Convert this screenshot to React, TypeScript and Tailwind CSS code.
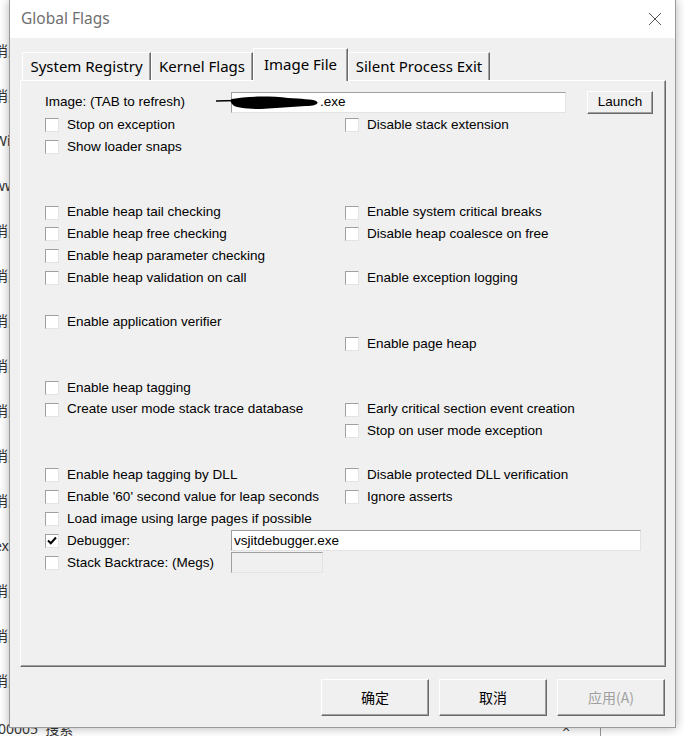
import React from "react";

type Row = [string | null, string | null];

const rows: Row[] = [
  ["Stop on exception", "Disable stack extension"],
  ["Show loader snaps", null],
  [null, null],
  [null, null],
  ["Enable heap tail checking", "Enable system critical breaks"],
  ["Enable heap free checking", "Disable heap coalesce on free"],
  ["Enable heap parameter checking", null],
  ["Enable heap validation on call", "Enable exception logging"],
  [null, null],
  ["Enable application verifier", null],
  [null, "Enable page heap"],
  [null, null],
  ["Enable heap tagging", null],
  ["Create user mode stack trace database", "Early critical section event creation"],
  [null, "Stop on user mode exception"],
  [null, null],
  ["Enable heap tagging by DLL", "Disable protected DLL verification"],
  ["Enable '60' second value for leap seconds", "Ignore asserts"],
  ["Load image using large pages if possible", null],
];

function Box({ checked }: { checked?: boolean }) {
  return (
    <span className="w-[14px] h-[14px] shrink-0 bg-white border-t border-l border-[#a0a0a0] border-r border-b border-r-[#e3e3e3] border-b-[#e3e3e3] flex items-center justify-center">
      {checked && (
        <svg width="10" height="9" viewBox="0 0 10 9">
          <path d="M1 4.5 L3.8 7.2 L9 1.5" stroke="#000" strokeWidth="2" fill="none" />
        </svg>
      )}
    </span>
  );
}

function Check({ label, checked }: { label: string; checked?: boolean }) {
  return (
    <div className="flex items-center gap-[8px] h-full">
      <Box checked={checked} />
      <span className="whitespace-nowrap">{label}</span>
    </div>
  );
}

function Tab({ label, w, active }: { label: string; w: string; active?: boolean }) {
  if (active)
    return (
      <div
        className={`${w} h-[33px] -mb-[1px] relative z-10 bg-[#f0f0f0] border-t border-l border-white border-r border-r-[#696969] shadow-[inset_-1px_0_0_#a0a0a0] flex items-start justify-center pt-[4px]`}
      >
        {label}
      </div>
    );
  return (
    <div
      className={`${w} h-[28px] border-t border-l border-white border-r border-r-[#696969] shadow-[inset_-1px_0_0_#a0a0a0] flex items-center justify-center`}
    >
      {label}
    </div>
  );
}

function Btn({ label, disabled }: { label: string; disabled?: boolean }) {
  return (
    <div
      className={`w-[108px] h-[37px] border-t border-l border-white border-r border-b border-r-[#696969] border-b-[#696969] shadow-[inset_-1px_-1px_0_#a0a0a0] flex items-center justify-center ${
        disabled ? "text-[#a0a0a0]" : "text-black"
      }`}
    >
      {label}
    </div>
  );
}

const bgLabels = ["消息", "消息", "Win", "ww", "消息", "消息", "消息", "消息", "消息", "消息", "消息", "exe", "消息", "消息", "消息"];

export default function App() {
  return (
    <div className="relative w-[685px] h-[736px] bg-white overflow-hidden font-['Liberation_Sans','Noto_Sans_CJK_SC',sans-serif] text-[13.5px] text-black">
      {/* window behind the dialog */}
      {bgLabels.map((t, i) => (
        <span
          key={i}
          className="absolute left-[-6px] text-[14px] text-[#333] font-['Noto_Sans','Noto_Sans_CJK_SC',sans-serif]"
          style={{ top: 40 + i * 45 }}
        >
          {t}
        </span>
      ))}
      <span className="absolute left-[-2px] top-[718px] text-[14px] text-[#333] font-['Noto_Sans','Noto_Sans_CJK_SC',sans-serif]">
        00005&nbsp;&nbsp;搜索
      </span>
      <span className="absolute left-[562px] top-[718px] text-[14px] text-[#333]">×</span>
      <div className="absolute left-[600px] top-[728px] w-px h-[10px] bg-[#999]" />

      {/* dialog */}
      <div className="absolute left-[9px] top-0 w-[667px] h-[728px] flex flex-col border border-[#9a9a9a] border-t-0 bg-[#f0f0f0] shadow-[0_0_10px_rgba(0,0,0,0.3)] z-10">
        <div className="h-[38px] bg-white flex items-center justify-between pl-[11px] pr-[13px] font-['Noto_Sans',sans-serif] text-[15.5px] text-[#6f6f6f]">
          <span>Global Flags</span>
          <svg width="14" height="14" viewBox="0 0 14 14">
            <path d="M1 1 L13 13 M13 1 L1 13" stroke="#555" strokeWidth="1" />
          </svg>
        </div>

        <div className="flex-1 flex flex-col px-[10px] pt-[10px]">
          <div className="flex items-end pl-[2px] h-[32px] font-['Noto_Sans',sans-serif] text-[15px]">
            <Tab label="System Registry" w="w-[129px]" />
            <Tab label="Kernel Flags" w="w-[102px]" />
            <Tab label="Image File" w="w-[95px]" active />
            <Tab label="Silent Process Exit" w="w-[142px]" />
          </div>

          <div className="w-[646px] h-[587px] border-t border-l border-white border-r border-b border-r-[#696969] border-b-[#696969] shadow-[inset_-1px_-1px_0_#a0a0a0] pl-[24px] pt-[10px]">
            <div className="h-[23px] flex items-center">
              <span className="w-[186px] shrink-0 whitespace-nowrap">Image: (TAB to refresh)</span>
              <div className="relative w-[335px] h-[21px] bg-white border-t border-l border-[#a0a0a0] border-r border-b border-r-[#e3e3e3] border-b-[#e3e3e3] flex items-center pl-[2px]">
                <span className="pl-[86px]">.exe</span>
                <svg className="absolute left-[-16px] top-[2px]" width="112" height="16" viewBox="0 0 112 16">
                  <path d="M0 6 L20 5.5" stroke="#000" strokeWidth="1.5" />
                  <path
                    d="M16 4 C30 1 55 1 72 3 C85 4 96 4 100 6 C104 8 100 11 90 11 C75 12 60 13 45 14 C32 14 20 13 17 10 C14 7 14 5 16 4 Z"
                    fill="#000"
                  />
                </svg>
              </div>
              <div className="ml-[21px] w-[66px] h-[23px] border-t border-l border-white border-r border-b border-r-[#696969] border-b-[#696969] shadow-[inset_-1px_-1px_0_#a0a0a0] flex items-center justify-center">
                Launch
              </div>
            </div>

            {rows.map(([l, r], i) => (
              <div key={i} className="h-[21.9px] grid grid-cols-[300px_1fr]">
                <div>{l && <Check label={l} />}</div>
                <div>{r && <Check label={r} />}</div>
              </div>
            ))}

            <div className="h-[21.9px] flex items-center">
              <div className="w-[186px] shrink-0">
                <Check label="Debugger:" checked />
              </div>
              <div className="w-[410px] h-[21px] bg-white border-t border-l border-[#a0a0a0] border-r border-b border-r-[#e3e3e3] border-b-[#e3e3e3] flex items-center pl-[2px]">
                vsjitdebugger.exe
              </div>
            </div>
            <div className="h-[21.9px] flex items-center">
              <div className="w-[186px] shrink-0">
                <Check label="Stack Backtrace: (Megs)" />
              </div>
              <div className="w-[92px] h-[21px] bg-[#f0f0f0] border-t border-l border-[#a0a0a0] border-r border-b border-r-[#e3e3e3] border-b-[#e3e3e3]" />
            </div>
          </div>

          <div className="flex justify-end gap-[10px] mt-[12px] font-['Noto_Sans_CJK_SC',sans-serif] text-[14px]">
            <Btn label="确定" />
            <Btn label="取消" />
            <Btn label="应用(A)" disabled />
          </div>
        </div>
      </div>
    </div>
  );
}
